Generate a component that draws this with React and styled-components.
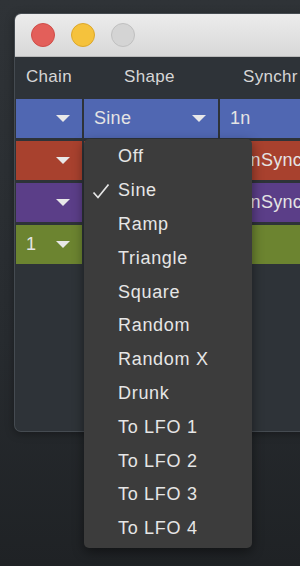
import React from 'react';
import styled, { createGlobalStyle } from 'styled-components';

const Global = createGlobalStyle`
    html, body {
        margin: 0;
        padding: 0;
        height: 100%;
        overflow: hidden;
    }
    body {
        background: linear-gradient(180deg, #2f3337 0%, #272b2f 60%, #1f2225 100%);
        font-family: "Liberation Sans", Arial, sans-serif;
    }
`;

const Page = styled.div`
    padding: 13px 0 0 14px;
    height: 566px;
    box-sizing: border-box;
`;

const Window = styled.div`
    width: 320px;
    height: 419px;
    background: #2e3338;
    border-radius: 7px;
    border: 1px solid #454b51;
    border-right: none;
    box-sizing: border-box;
    display: flex;
    flex-direction: column;
    box-shadow: 0 2px 8px rgba(0, 0, 0, 0.35);
`;

const TitleBar = styled.div`
    height: 43px;
    flex-shrink: 0;
    background: linear-gradient(180deg, #ececec 0%, #d8d8d8 100%);
    border-radius: 6px 0 0 0;
    border-bottom: 1px solid #b9b9b9;
    display: flex;
    align-items: center;
    gap: 16px;
    padding-left: 16px;
    box-sizing: border-box;
`;

const Light = styled.div`
    width: 24px;
    height: 24px;
    border-radius: 50%;
    box-sizing: border-box;
    background: ${p => p.$color};
    border: 1px solid ${p => p.$edge};
`;

const Table = styled.div`
    display: flex;
    flex-direction: column;
    gap: 3px;
    padding-left: 1px;
`;

const Row = styled.div`
    display: grid;
    grid-template-columns: 66px 134px 1fr;
    gap: 2px;
    height: ${p => p.$h || 39}px;
`;

const Head = styled.div`
    display: flex;
    align-items: center;
    padding-left: ${p => p.$pad || 0}px;
    color: #d6d6d6;
    font-size: 17px;
    letter-spacing: 0.3px;
`;

const Cell = styled.div`
    position: relative;
    display: flex;
    align-items: center;
    padding: 0 12px 0 ${p => p.$pad || 10}px;
    background: ${p => p.$bg};
    color: #e4e4e4;
    font-size: 18px;
    letter-spacing: 0.3px;
    white-space: nowrap;
    overflow: ${p => p.$clip ? 'hidden' : 'visible'};
`;

const Arrow = styled.span`
    width: 0;
    height: 0;
    margin-left: auto;
    border-left: 7px solid transparent;
    border-right: 7px solid transparent;
    border-top: 7px solid #e8e8e8;
`;

const Menu = styled.div`
    position: absolute;
    left: 0;
    top: calc(100% + 1px);
    width: 168px;
    padding: 1px 0 2px;
    background: #3c3c3c;
    border-radius: 5px;
    box-shadow: 0 4px 12px rgba(0, 0, 0, 0.45);
    z-index: 10;
`;

const Item = styled.div`
    position: relative;
    height: 33.8px;
    display: flex;
    align-items: center;
    padding-left: 34px;
    color: #e6e6e6;
    font-size: 18px;
    letter-spacing: 0.7px;
`;

const Check = styled.svg`
    position: absolute;
    left: 8px;
    top: 9px;
`;

const shapes = ['Off', 'Sine', 'Ramp', 'Triangle', 'Square', 'Random', 'Random X', 'Drunk', 'To LFO 1', 'To LFO 2', 'To LFO 3', 'To LFO 4'];

const rows = [
    { color: '#a8412e', chain: '', sync: '16nSync' },
    { color: '#5b3e88', chain: '', sync: '16nSync' },
    { color: '#6c8430', chain: '1', sync: '' },
];

export default function App() {
    return (
        <>
            <Global />
            <Page>
                <Window>
                    <TitleBar>
                        <Light $color="#e35f5a" $edge="#cf4d48" />
                        <Light $color="#f5c23c" $edge="#dca72b" />
                        <Light $color="#d4d4d4" $edge="#c0c0c0" />
                    </TitleBar>
                    <Table>
                        <Row $h={39}>
                            <Head $pad={10}>Chain</Head>
                            <Head $pad={40}>Shape</Head>
                            <Head $pad={23}>Synchr</Head>
                        </Row>
                        <Row>
                            <Cell $bg="#5067b2"><Arrow /></Cell>
                            <Cell $bg="#5067b2">
                                Sine<Arrow />
                                <Menu>
                                    {shapes.map(s => (
                                        <Item key={s}>
                                            {s === 'Sine' && (
                                                <Check width="18" height="16" viewBox="0 0 18 16">
                                                    <path d="M1.5 9.5 L6 14.5 L16.5 1.5" fill="none" stroke="#e6e6e6" strokeWidth="1.7" />
                                                </Check>
                                            )}
                                            {s}
                                        </Item>
                                    ))}
                                </Menu>
                            </Cell>
                            <Cell $bg="#5067b2" $clip>1n</Cell>
                        </Row>
                        {rows.map((r, i) => (
                            <Row key={i}>
                                <Cell $bg={r.color}>{r.chain}<Arrow /></Cell>
                                <Cell $bg={r.color} />
                                <Cell $bg={r.color} $clip>{r.sync}</Cell>
                            </Row>
                        ))}
                    </Table>
                </Window>
            </Page>
        </>
    );
}
